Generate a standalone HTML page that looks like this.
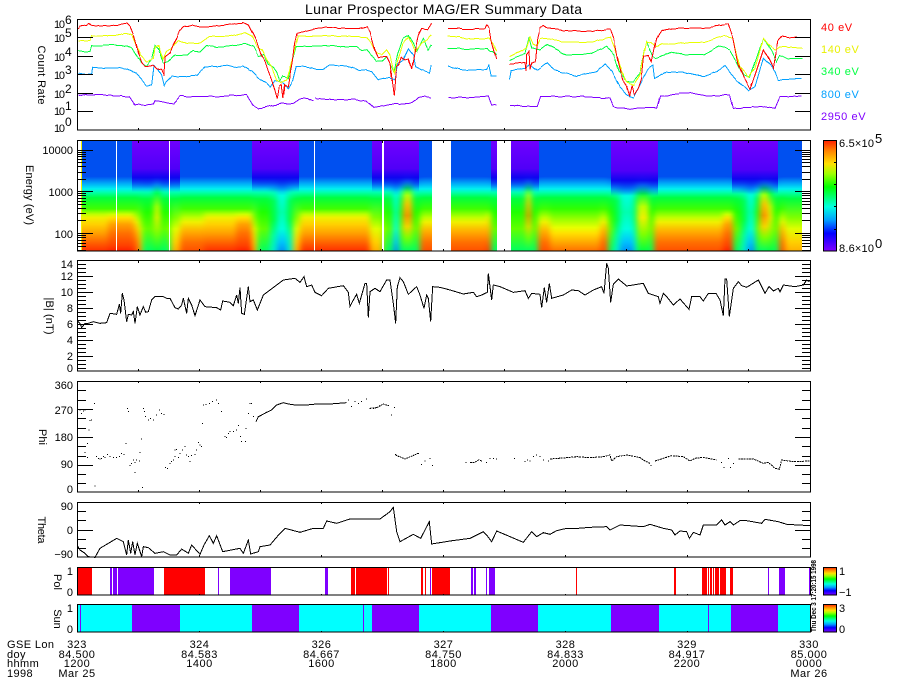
<!DOCTYPE html>
<html><head><meta charset="utf-8"><title>Lunar Prospector MAG/ER Summary Data</title>
<style>
html,body{margin:0;padding:0;background:#fff}
svg{display:block}
text{font-family:"Liberation Sans",sans-serif;font-size:11px;fill:#000}
.p{fill:none;stroke-width:3;shape-rendering:crispEdges;stroke-linejoin:miter}
.t{fill:none;stroke:#000;stroke-width:1;shape-rendering:crispEdges}
.c{text-anchor:middle;letter-spacing:.5px}
.r{text-anchor:end}
.b{shape-rendering:crispEdges}
</style></head><body>
<svg width="900" height="700" viewBox="0 0 900 700" xmlns="http://www.w3.org/2000/svg">
<defs>
<filter id="bx" x="-5%" y="0" width="110%" height="100%" color-interpolation-filters="sRGB"><feGaussianBlur stdDeviation="3 0"/></filter>
<filter id="jit" filterUnits="userSpaceOnUse" x="70" y="15" width="750" height="120" color-interpolation-filters="sRGB"><feTurbulence type="fractalNoise" baseFrequency=".14 .01" numOctaves="1" seed="4" result="n"/><feDisplacementMap in="SourceGraphic" in2="n" scale="3" xChannelSelector="G" yChannelSelector="R"/></filter>
<clipPath id="cp"><rect x="77" y="139" width="733" height="112"/></clipPath>
<linearGradient id="A" x1="0" y1="0" x2="0" y2="1"><stop offset="0" stop-color="#0050f0"/><stop offset=".33" stop-color="#0050f0"/><stop offset=".39" stop-color="#00a8f8"/><stop offset=".44" stop-color="#00f0f0"/><stop offset=".47" stop-color="#00ffb0"/><stop offset=".52" stop-color="#00ff40"/><stop offset=".62" stop-color="#40ff00"/><stop offset=".67" stop-color="#c0ff00"/><stop offset=".70" stop-color="#f0f000"/><stop offset=".76" stop-color="#ffd000"/><stop offset=".84" stop-color="#ffa000"/><stop offset=".95" stop-color="#ff5000"/><stop offset="1" stop-color="#ff3000"/></linearGradient>
<linearGradient id="H" x1="0" y1="0" x2="0" y2="1"><stop offset="0" stop-color="#0050f0"/><stop offset=".33" stop-color="#0050f0"/><stop offset=".39" stop-color="#00a8f8"/><stop offset=".44" stop-color="#00f0f0"/><stop offset=".47" stop-color="#00ffb0"/><stop offset=".52" stop-color="#00ff40"/><stop offset=".62" stop-color="#40ff00"/><stop offset=".67" stop-color="#d0ff00"/><stop offset=".70" stop-color="#ffe000"/><stop offset=".76" stop-color="#ffa000"/><stop offset=".84" stop-color="#ff7000"/><stop offset=".95" stop-color="#ff4000"/><stop offset="1" stop-color="#ff2000"/></linearGradient>
<linearGradient id="M" x1="0" y1="0" x2="0" y2="1"><stop offset="0" stop-color="#0050f0"/><stop offset=".33" stop-color="#0050f0"/><stop offset=".39" stop-color="#00a8f8"/><stop offset=".44" stop-color="#00f0f0"/><stop offset=".47" stop-color="#00ffb0"/><stop offset=".52" stop-color="#00ff40"/><stop offset=".62" stop-color="#40ff00"/><stop offset=".70" stop-color="#c0ff00"/><stop offset=".74" stop-color="#f0f000"/><stop offset=".82" stop-color="#ffb000"/><stop offset=".92" stop-color="#ff7000"/><stop offset="1" stop-color="#ff5000"/></linearGradient>
<linearGradient id="R" x1="0" y1="0" x2="0" y2="1"><stop offset="0" stop-color="#0050f0"/><stop offset=".33" stop-color="#0050f0"/><stop offset=".39" stop-color="#00a8f8"/><stop offset=".44" stop-color="#00f0f0"/><stop offset=".47" stop-color="#00ffb0"/><stop offset=".52" stop-color="#00ff40"/><stop offset=".62" stop-color="#30ff00"/><stop offset=".72" stop-color="#a0ff00"/><stop offset=".79" stop-color="#e8ff00"/><stop offset=".84" stop-color="#ffe000"/><stop offset=".91" stop-color="#ffb000"/><stop offset="1" stop-color="#ff7000"/></linearGradient>
<linearGradient id="Y" x1="0" y1="0" x2="0" y2="1"><stop offset="0" stop-color="#0050f0"/><stop offset=".33" stop-color="#0050f0"/><stop offset=".39" stop-color="#00a8f8"/><stop offset=".44" stop-color="#00f0f0"/><stop offset=".47" stop-color="#00ffb0"/><stop offset=".53" stop-color="#00ff40"/><stop offset=".70" stop-color="#80ff00"/><stop offset=".80" stop-color="#e0ff00"/><stop offset=".92" stop-color="#ffd000"/><stop offset="1" stop-color="#ffb000"/></linearGradient>
<linearGradient id="G" x1="0" y1="0" x2="0" y2="1"><stop offset="0" stop-color="#0050f0"/><stop offset=".34" stop-color="#0050f0"/><stop offset=".40" stop-color="#00a8f8"/><stop offset=".44" stop-color="#00f0f0"/><stop offset=".48" stop-color="#00ffa0"/><stop offset=".53" stop-color="#00ff40"/><stop offset=".65" stop-color="#20ff00"/><stop offset=".80" stop-color="#60ff00"/><stop offset="1" stop-color="#00ff60"/></linearGradient>
<linearGradient id="S" x1="0" y1="0" x2="0" y2="1"><stop offset="0" stop-color="#0050f0"/><stop offset=".28" stop-color="#0050f0"/><stop offset=".34" stop-color="#00a8f8"/><stop offset=".40" stop-color="#00f0f0"/><stop offset=".48" stop-color="#00ff40"/><stop offset=".60" stop-color="#c0ff00"/><stop offset=".70" stop-color="#f0f000"/><stop offset=".85" stop-color="#80ff00"/><stop offset="1" stop-color="#00ff40"/></linearGradient>
<linearGradient id="O" x1="0" y1="0" x2="0" y2="1"><stop offset="0" stop-color="#0050f0"/><stop offset=".26" stop-color="#0050f0"/><stop offset=".32" stop-color="#00a8f8"/><stop offset=".37" stop-color="#00f0f0"/><stop offset=".43" stop-color="#00ff40"/><stop offset=".50" stop-color="#c0ff00"/><stop offset=".58" stop-color="#ffc000"/><stop offset=".68" stop-color="#ff9000"/><stop offset=".78" stop-color="#ffd000"/><stop offset=".88" stop-color="#80ff00"/><stop offset="1" stop-color="#00ff60"/></linearGradient>
<linearGradient id="C" x1="0" y1="0" x2="0" y2="1"><stop offset="0" stop-color="#0050f0"/><stop offset=".36" stop-color="#0050f0"/><stop offset=".44" stop-color="#00b0f8"/><stop offset=".50" stop-color="#00ffe0"/><stop offset=".65" stop-color="#00ffb0"/><stop offset=".80" stop-color="#00ffe0"/><stop offset=".92" stop-color="#00c0ff"/><stop offset="1" stop-color="#0090f8"/></linearGradient>
<linearGradient id="K" x1="0" y1="0" x2="0" y2="1"><stop offset="0" stop-color="#0050f0"/><stop offset=".34" stop-color="#0050f0"/><stop offset=".42" stop-color="#00c0f8"/><stop offset=".48" stop-color="#00ffb0"/><stop offset=".55" stop-color="#00ff50"/><stop offset=".72" stop-color="#00ff40"/><stop offset=".86" stop-color="#00ffa0"/><stop offset="1" stop-color="#00f0d0"/></linearGradient>
<linearGradient id="P" x1="0" y1="0" x2="0" y2="1"><stop offset="0" stop-color="#7000ff"/><stop offset=".55" stop-color="#5000f8"/><stop offset=".72" stop-color="#1000f0" stop-opacity=".95"/><stop offset="1" stop-color="#0030f0" stop-opacity="0"/></linearGradient>
<linearGradient id="RB" x1="0" y1="0" x2="0" y2="1"><stop offset="0" stop-color="#ff2000"/><stop offset=".09" stop-color="#ff8000"/><stop offset=".21" stop-color="#ffe000"/><stop offset=".30" stop-color="#a0ff00"/><stop offset=".42" stop-color="#00ff00"/><stop offset=".60" stop-color="#00ffe0"/><stop offset=".72" stop-color="#00a0ff"/><stop offset=".84" stop-color="#0000ff"/><stop offset="1" stop-color="#8000ff"/></linearGradient>
</defs>

<text x="443.5" y="14" text-anchor="middle" style="font-size:14px" textLength="277" lengthAdjust="spacing">Lunar Prospector MAG/ER Summary Data</text>

<!-- panel 1 curves -->
<g filter="url(#jit)">
<g transform="scale(.33333)">
<polyline class="p" stroke="#7f00ff" points="235,285 245,288 255,284 275,285 300,283 320,286 345,288 365,287 390,292 405,315 415,312 425,315 445,314 460,312 465,302 485,305 500,308 520,312 540,288 570,290 600,290 630,289 660,290 700,286 740,285 760,318 775,325 795,322 810,318 830,314 850,310 880,310 900,297 920,295 940,302"/>
<polyline class="p" stroke="#7f00ff" points="945,294 975,298 1000,300 1030,298 1060,298 1080,301 1100,303 1120,322 1135,320 1150,318 1165,315 1180,312 1200,313 1225,310 1240,305 1255,292 1275,290 1295,293"/>
<polyline class="p" stroke="#00a0ff" points="235,218 250,222 275,222 278,202 310,205 340,205 360,203 380,207 410,222 425,240 440,257 455,255 462,195 475,210 485,225 493,258 500,245 515,230 550,230 590,225 615,200 650,200 680,197 700,202 730,198 755,215 775,235 800,250 810,262 825,240 850,250 865,265 880,240 890,200 920,200 950,208 970,208 985,197 1040,197 1075,210 1095,208 1115,215 1135,240 1170,232 1185,240 1195,190 1210,180 1225,145 1240,165 1245,200 1265,210 1290,218 1295,195"/>
<polyline class="p" stroke="#00ff40" points="235,150 250,155 270,155 275,138 300,138 340,135 380,138 395,145 410,170 425,190 440,198 455,175 465,135 475,145 490,190 505,185 525,165 560,165 580,152 600,155 620,135 650,142 680,140 735,130 760,140 775,170 790,165 805,195 820,200 830,215 840,245 850,230 865,235 875,190 890,140 920,138 990,138 1070,140 1085,150 1100,148 1115,165 1130,185 1145,185 1160,170 1170,190 1182,215 1195,160 1210,115 1225,105 1240,130 1250,155 1270,115 1285,150 1295,135"/>
<polyline class="p" stroke="#e8ff00" points="235,122 270,122 275,108 300,108 340,108 375,100 395,105 405,130 420,165 440,185 460,175 465,140 475,135 490,180 500,155 515,145 535,120 560,130 600,128 625,110 680,110 735,98 755,108 770,140 785,150 800,180 815,200 830,240 845,250 860,240 880,170 895,108 950,108 1040,108 1075,110 1100,112 1115,130 1130,160 1145,165 1160,150 1170,165 1183,220 1195,180 1210,130 1225,110 1235,130 1245,155 1265,130 1285,115 1295,105"/>
<polyline class="p" stroke="#ff0000" points="235,85 240,78 250,76 260,75 268,70 275,77 290,77 320,78 350,77 365,72 380,69 390,80 398,100 405,125 415,165 425,190 435,198 450,198 460,195 470,205 485,208 493,225 497,170 510,160 520,135 530,115 540,90 550,78 565,80 580,75 600,80 640,80 680,75 710,70 730,68 745,75 755,95 770,125 785,170 795,185 805,215 815,240 825,270 832,295 838,260 845,255 850,295 855,255 865,260 870,230 878,185 885,130 892,100 920,92 950,85 990,82 1040,85 1080,85 1100,80 1110,95 1125,150 1135,175 1150,170 1160,170 1170,190 1178,250 1183,287 1190,200 1197,195 1205,170 1215,180 1225,175 1235,205 1245,150 1255,105 1265,85 1285,88 1295,72"/>
</g>
<g transform="translate(450 0) scale(.33333)">
<polyline class="p" stroke="#7f00ff" points="-5,293 60,293 115,288 125,315 140,316"/>
<polyline class="p" stroke="#7f00ff" points="180,317 225,318 260,320 270,290 340,290 400,290 480,295 490,320 530,327 570,324 610,322 620,325 630,290 680,282 720,278 770,288 840,285 850,325 900,322 950,320 975,325 990,290 1055,288"/>
<polyline class="p" stroke="#00a0ff" points="-5,198 30,208 110,208 118,195 125,228 140,230"/>
<polyline class="p" stroke="#00a0ff" points="180,238 185,212 225,205 240,195 260,212 290,190 310,210 380,228 440,215 465,192 485,215 510,260 530,285 550,293 575,245 595,205 610,195 615,235 650,215 700,218 760,230 800,215 825,198 860,240 895,272 915,260 940,175 960,195 975,215 985,240 1055,235"/>
<polyline class="p" stroke="#00ff40" points="-5,145 30,145 110,145 120,155 130,155 140,165"/>
<polyline class="p" stroke="#00ff40" points="180,182 225,160 237,115 245,145 270,150 290,135 350,165 420,162 470,140 490,165 505,210 530,245 548,245 570,220 590,125 610,170 620,175 665,155 700,165 760,165 810,138 840,150 860,185 880,225 900,232 940,115 965,155 980,185 990,165 1010,175 1058,175"/>
<polyline class="p" stroke="#e8ff00" points="-5,108 60,115 105,115 118,115 130,130 140,155"/>
<polyline class="p" stroke="#e8ff00" points="180,170 230,145 240,112 250,135 260,138 270,115 340,125 420,128 480,113 495,150 515,215 530,245 550,255 570,225 590,125 605,128 620,140 635,132 760,128 820,108 850,115 870,200 895,232 915,205 940,115 955,135 975,150 990,140 1010,140 1058,145"/>
<polyline class="p" stroke="#ff0000" points="-5,85 60,87 105,85 110,75 118,85 125,125 140,178"/>
<polyline class="p" stroke="#ff0000" points="180,193 225,187 228,213 230,165 237,155 240,210 245,190 255,185 262,115 270,82 280,78 290,85 350,92 420,95 480,88 490,115 505,190 518,240 530,258 538,285 545,255 552,285 565,265 575,235 582,170 595,165 605,185 620,115 635,92 670,85 700,85 760,85 820,75 835,72 850,115 865,190 880,230 900,268 915,225 925,195 940,150 955,175 970,205 985,120 995,108 1020,112 1055,112"/>
</g>
</g>

<!-- spectrogram -->
<g clip-path="url(#cp)">
<g filter="url(#bx)">
<rect x="60" y="140" width="72" height="111" fill="url(#A)"/>
<rect x="108" y="140" width="28" height="111" fill="url(#H)"/>
<rect x="134" y="140" width="5" height="111" fill="url(#M)"/>
<rect x="139" y="140" width="3" height="111" fill="url(#Y)"/>
<rect x="142" y="140" width="12" height="111" fill="url(#G)"/>
<rect x="154" y="140" width="6" height="111" fill="url(#S)"/>
<rect x="160" y="140" width="11" height="111" fill="url(#G)"/>
<rect x="171" y="140" width="9" height="111" fill="url(#Y)"/>
<rect x="180" y="140" width="24" height="111" fill="url(#M)"/>
<rect x="204" y="140" width="46" height="111" fill="url(#A)"/>
<rect x="236" y="140" width="16" height="111" fill="url(#H)"/>
<rect x="252" y="140" width="5" height="111" fill="url(#Y)"/>
<rect x="257" y="140" width="13" height="111" fill="url(#G)"/>
<rect x="270" y="140" width="7" height="111" fill="url(#K)"/>
<rect x="277" y="140" width="10" height="111" fill="url(#C)"/>
<rect x="287" y="140" width="6" height="111" fill="url(#K)"/>
<rect x="293" y="140" width="7" height="111" fill="url(#Y)"/>
<rect x="300" y="140" width="70" height="111" fill="url(#A)"/>
<rect x="370" y="140" width="13" height="111" fill="url(#Y)"/>
<rect x="383" y="140" width="10" height="111" fill="url(#G)"/>
<rect x="393" y="140" width="6" height="111" fill="url(#C)"/>
<rect x="399" y="140" width="4" height="111" fill="url(#G)"/>
<rect x="403" y="140" width="9" height="111" fill="url(#O)"/>
<rect x="412" y="140" width="8" height="111" fill="url(#G)"/>
<rect x="420" y="140" width="70" height="111" fill="url(#M)"/>
<rect x="487" y="140" width="4" height="111" fill="url(#A)"/>
<rect x="491" y="140" width="20" height="111" fill="url(#G)"/>
<rect x="511" y="140" width="15" height="111" fill="url(#G)"/>
<rect x="526" y="140" width="5" height="111" fill="url(#O)"/>
<rect x="531" y="140" width="7" height="111" fill="url(#G)"/>
<rect x="538" y="140" width="12" height="111" fill="url(#M)"/>
<rect x="550" y="140" width="58" height="111" fill="url(#R)"/>
<rect x="600" y="140" width="8" height="111" fill="url(#M)"/>
<rect x="608" y="140" width="6" height="111" fill="url(#G)"/>
<rect x="614" y="140" width="6" height="111" fill="url(#K)"/>
<rect x="620" y="140" width="14" height="111" fill="url(#C)"/>
<rect x="634" y="140" width="3" height="111" fill="url(#K)"/>
<rect x="637" y="140" width="12" height="111" fill="url(#S)"/>
<rect x="649" y="140" width="5" height="111" fill="url(#G)"/>
<rect x="654" y="140" width="69" height="111" fill="url(#M)"/>
<rect x="723" y="140" width="10" height="111" fill="url(#H)"/>
<rect x="733" y="140" width="8" height="111" fill="url(#G)"/>
<rect x="741" y="140" width="6" height="111" fill="url(#K)"/>
<rect x="747" y="140" width="8" height="111" fill="url(#C)"/>
<rect x="755" y="140" width="5" height="111" fill="url(#G)"/>
<rect x="760" y="140" width="8" height="111" fill="url(#O)"/>
<rect x="768" y="140" width="5" height="111" fill="url(#S)"/>
<rect x="773" y="140" width="6" height="111" fill="url(#G)"/>
<rect x="779" y="140" width="6" height="111" fill="url(#M)"/>
<rect x="785" y="140" width="35" height="111" fill="url(#Y)"/>
</g>
<g class="b" fill="url(#P)">
<rect x="132" y="140" width="48" height="52"/>
<rect x="252" y="140" width="47" height="52"/>
<rect x="372" y="140" width="47" height="52"/>
<rect x="491" y="140" width="6" height="52"/>
<rect x="511" y="140" width="28" height="52"/>
<rect x="611" y="140" width="47" height="56"/>
<rect x="732" y="140" width="46" height="54"/>
</g>
<g class="b" fill="#fff">
<rect x="77" y="139" width="2" height="112"/>
<rect x="79" y="140" width="2" height="111"/>
<rect x="432" y="139" width="19" height="112"/>
<rect x="497" y="139" width="14" height="112"/>
<rect x="802" y="139" width="8" height="112"/>
<rect x="116" y="140" width="1" height="111"/>
<rect x="169" y="140" width="1" height="111"/>
<rect x="314" y="140" width="1" height="111"/>
<rect x="382" y="140" width="2" height="111"/>
</g>
<rect class="b" x="81" y="140" width="1" height="111" fill="#f0f000"/>
</g>

<!-- panel 3 |B| -->
<g transform="scale(.33333) translate(0 765)">
<polyline class="p" stroke="#000" points="232,198 240,205 245,218 255,205 265,205 280,200 300,205 320,203 330,175 350,178 358,148 362,175 367,115 372,135 380,200 385,178 395,180 400,170 405,205 412,155 420,180 430,155 437,172 445,170 455,135 465,125 490,125 500,130 510,130 525,158 535,162 545,150 550,130 560,175 565,130 575,150 585,182 600,135 615,155 650,158 662,165 668,138 690,142 700,152 710,120 715,145 720,98 725,175 733,178 745,95 750,140 760,135 772,165 790,120 810,105 830,90 850,75 885,70 900,82 912,65 920,95 935,90 945,112 965,122 985,100 1030,92 1045,112 1050,155 1060,135 1070,118 1078,145 1095,85 1100,85 1105,188 1110,110 1125,100 1140,110 1160,75 1170,75 1180,145 1187,205 1192,95 1200,68 1210,80 1225,118 1250,95 1260,120 1272,160 1280,120 1285,130 1292,200 1298,95 1320,97 1350,105"/>
</g>
<g transform="translate(450 0) scale(.33333) translate(0 765)">
<polyline class="p" stroke="#000" points="0,105 40,117 70,112 80,125 95,120 112,112 115,55 125,135 130,90 150,95 190,112 225,107 235,130 245,115 270,118 275,158 283,98 290,142 298,85 305,130 340,120 365,105 385,107 405,120 430,105 455,95 462,115 470,25 475,40 482,142 490,88 505,72 530,93 580,85 595,115 625,125 630,145 640,115 650,125 670,150 690,132 717,163 725,125 750,125 760,138 775,115 798,115 810,135 820,182 825,72 830,72 838,185 850,100 865,80 875,92 890,97 925,75 945,115 957,95 970,108 985,100 990,110 1000,90 1035,95 1060,90 1070,75 1078,80"/>
</g>

<!-- phi -->
<g transform="scale(.33333) translate(0 1125)">
<path fill="none" stroke="#000" stroke-width="3" stroke-linecap="square" class="b" d="M240 105h.1M245 115h.1M250 108h.1M255 105h.1M283 85h.1M270 137h.1M275 135h.1M267 165h.1M262 205h.1M255 232h.1M263 247h.1M285 333h.1M290 245h.1M295 250h.1M300 252h.1M305 250h.1M310 245h.1M315 248h.1M322 238h.1M330 245h.1M340 248h.1M350 248h.1M358 245h.1M365 235h.1M372 238h.1M378 205h.1M382 100h.1M385 110h.1M390 272h.1M395 265h.1M400 255h.1M405 262h.1M405 292h.1M410 255h.1M418 258h.1M420 232h.1M424 192h.1M427 337h.1M430 100h.1M433 110h.1M437 125h.1M445 135h.1M452 130h.1M460 135h.1M470 120h.1M478 105h.1M485 115h.1M492 118h.1M497 278h.1M503 280h.1M510 265h.1M515 260h.1M520 255h.1M525 225h.1M530 223h.1M525 245h.1M535 248h.1M540 235h.1M548 225h.1M555 215h.1M560 240h.1M565 245h.1M570 260h.1M575 242h.1M585 238h.1M590 225h.1M595 203h.1M600 210h.1M605 215h.1M608 145h.1M610 90h.1M618 88h.1M628 85h.1M638 80h.1M650 75h.1M655 85h.1M665 110h.1M675 185h.1M680 188h.1M685 175h.1M690 170h.1M700 170h.1M710 165h.1M715 152h.1M722 185h.1M725 200h.1M737 200h.1M738 160h.1M745 115h.1M750 85h.1M755 85h.1M760 125h.1M1045 75h.1M1055 95h.1M1065 80h.1M1075 85h.1M1085 80h.1M1100 72h.1M1110 100h.1M1120 100h.1M1130 98h.1M1140 92h.1M1150 87h.1M1165 92h.1M1175 120h.1M1183 98h.1M1187 238h.1M1195 245h.1M1215 252h.1M1240 242h.1M1255 235h.1M1265 268h.1M1275 258h.1M1290 250h.1M1297 272h.1"/>
<polyline class="p" stroke="#000" points="768,140 775,125 785,120 800,112 815,105 830,90 850,83 865,87 885,90 920,90 950,87 990,87 1040,83"/>
<polyline class="p" stroke="#000" stroke-dasharray="5 2" points="1110,100 1130,98 1150,87 1165,92"/>
<polyline class="p" stroke="#000" stroke-dasharray="5 2" points="1187,240 1215,252 1255,235"/>
</g>
<g transform="translate(450 0) scale(.33333) translate(0 1125)">
<path fill="none" stroke="#000" stroke-width="3" stroke-linecap="square" class="b" d="M48 262h.1M85 255h.1M95 258h.1M110 262h.1M120 250h.1M130 250h.1M140 252h.1M193 250h.1M225 260h.1M232 255h.1M240 258h.1M250 245h.1M260 240h.1M270 245h.1M280 255h.1M295 258h.1M603 272h.1M815 262h.1M822 278h.1M835 250h.1M842 278h.1M850 265h.1"/>
<polyline class="p" stroke="#000" stroke-dasharray="6 2" points="60,262 75,262 85,255 95,258"/>
<polyline class="p" stroke="#000" stroke-dasharray="6 2" points="300,252 350,248 380,245 420,248 460,245 480,240 485,258 500,245 530,240 570,248 585,258 600,265"/>
<polyline class="p" stroke="#000" stroke-dasharray="6 2" points="615,258 640,250 665,242 700,245 720,258 735,250 760,247 800,255"/>
<polyline class="p" stroke="#000" stroke-dasharray="6 2" points="865,252 910,252 940,265 955,262 975,280 988,283 995,255 1030,260 1080,258"/>
</g>

<!-- theta -->
<g transform="scale(.33333) translate(0 1125)">
<polyline class="p" stroke="#000" points="232,512 240,525 255,535 265,545 285,547 300,520 350,490 370,500 380,540 385,495 392,535 398,500 405,540 412,505 425,545 430,515 445,518 465,535 490,530 510,540 530,540 545,522 565,535 575,510 600,538 612,510 628,482 640,505 650,482 668,530 720,520 730,535 745,495 752,537 775,530 780,515 810,510 840,475 855,460 900,472 940,460 970,460 980,438 1010,445 1050,432 1140,432 1170,410 1180,397 1190,470 1200,500 1240,478 1262,490 1288,440 1295,507 1350,498"/>
</g>
<g transform="translate(450 0) scale(.33333) translate(0 1125)">
<polyline class="p" stroke="#000" points="0,498 60,490 100,470 110,480 125,500 140,468 220,502 245,470 260,485 280,473 300,478 320,467 350,460 385,460 420,457 470,455 480,465 510,450 580,455 600,448 640,460 665,465 675,480 690,468 710,470 718,490 730,472 750,480 760,450 800,450 815,435 825,450 840,440 850,450 870,437 890,437 935,445 945,433 985,440 1010,448 1080,452"/>
</g>

<!-- pol -->
<g class="b">
<g fill="#ff0000"><rect x="77" y="567" width="15" height="28"/><rect x="164" y="567" width="41" height="28"/><rect x="351" y="567" width="4" height="28"/><rect x="356" y="567" width="31" height="28"/><rect x="388" y="567" width="1" height="28"/><rect x="421" y="567" width="2" height="28"/><rect x="425" y="567" width="1" height="28"/><rect x="432" y="567" width="18" height="28"/><rect x="576" y="567" width="1" height="28"/><rect x="674" y="567" width="2" height="28"/><rect x="702" y="567" width="5" height="28"/><rect x="708" y="567" width="1" height="28"/><rect x="710" y="567" width="2" height="28"/><rect x="713" y="567" width="1" height="28"/><rect x="715" y="567" width="4" height="28"/><rect x="720" y="567" width="6" height="28"/><rect x="730" y="567" width="3" height="28"/></g>
<g fill="#7f00ff"><rect x="110" y="567" width="2" height="28"/><rect x="113" y="567" width="4" height="28"/><rect x="118" y="567" width="36" height="28"/><rect x="218" y="567" width="1" height="28"/><rect x="230" y="567" width="41" height="28"/><rect x="325" y="567" width="3" height="28"/><rect x="430" y="567" width="1" height="28"/><rect x="471" y="567" width="2" height="28"/><rect x="474" y="567" width="2" height="28"/><rect x="486" y="567" width="1" height="28"/><rect x="489" y="567" width="6" height="28"/><rect x="768" y="567" width="1" height="28"/><rect x="779" y="567" width="6" height="28"/><rect x="809" y="567" width="1" height="28"/></g>
<!-- sun -->
<rect x="77" y="604" width="733" height="28" fill="#00ffff"/>
<g fill="#7f00ff"><rect x="80" y="604" width="1" height="28"/><rect x="132" y="604" width="48" height="28"/><rect x="252" y="604" width="47" height="28"/><rect x="363" y="604" width="1" height="28"/><rect x="372" y="604" width="47" height="28"/><rect x="491" y="604" width="47" height="28"/><rect x="611" y="604" width="48" height="28"/><rect x="708" y="604" width="1" height="28"/><rect x="731" y="604" width="47" height="28"/></g>
</g>

<!-- ticks -->
<g id="lt" class="t">
<path d="M78 37.5h15M78 56.5h15M78 74.5h15M78 93.5h15M78 111.5h15"/>
<path d="M78 150.5h15M78 191.5h15M78 233.5h15M78 152.5h8M78 154.5h8M78 156.5h8M78 159.5h8M78 162.5h8M78 166.5h8M78 172.5h8M78 179.5h8M78 193.5h8M78 195.5h8M78 198.5h8M78 201.5h8M78 204.5h8M78 208.5h8M78 213.5h8M78 220.5h8M78 235.5h8M78 237.5h8M78 240.5h8M78 243.5h8M78 246.5h8M78 250.5h8"/>
<path d="M78 276.5h15M78 292.5h15M78 308.5h15M78 324.5h15M78 340.5h15M78 356.5h15M78 264.5h8M78 268.5h8M78 272.5h8M78 280.5h8M78 284.5h8M78 288.5h8M78 296.5h8M78 300.5h8M78 304.5h8M78 312.5h8M78 316.5h8M78 320.5h8M78 328.5h8M78 332.5h8M78 336.5h8M78 344.5h8M78 348.5h8M78 352.5h8M78 360.5h8M78 364.5h8M78 368.5h8"/>
<path d="M78 409.5h15M78 437.5h15M78 465.5h15M78 390.5h8M78 400.5h8M78 418.5h8M78 428.5h8M78 446.5h8M78 456.5h8M78 474.5h8M78 483.5h8"/>
<path d="M78 530.5h15M78 511.5h8M78 520.5h8M78 539.5h8M78 548.5h8"/>
</g>
<use href="#lt" transform="translate(888 0) scale(-1 1)"/>
<path class="t" d="M138.500 20v2M199.500 20v2M260.500 20v2M321.500 20v2M382.500 20v2M443.500 20v2M504.500 20v2M565.500 20v2M626.500 20v2M687.500 20v2M748.500 20v2M138.500 128v2M199.500 128v2M260.500 128v2M321.500 128v2M382.500 128v2M443.500 128v2M504.500 128v2M565.500 128v2M626.500 128v2M687.500 128v2M748.500 128v2M138.500 141v2M199.500 141v2M260.500 141v2M321.500 141v2M382.500 141v2M443.500 141v2M504.500 141v2M565.500 141v2M626.500 141v2M687.500 141v2M748.500 141v2M138.500 249v2M199.500 249v2M260.500 249v2M321.500 249v2M382.500 249v2M443.500 249v2M504.500 249v2M565.500 249v2M626.500 249v2M687.500 249v2M748.500 249v2M138.500 261v2M199.500 261v2M260.500 261v2M321.500 261v2M382.500 261v2M443.500 261v2M504.500 261v2M565.500 261v2M626.500 261v2M687.500 261v2M748.500 261v2M138.500 369v2M199.500 369v2M260.500 369v2M321.500 369v2M382.500 369v2M443.500 369v2M504.500 369v2M565.500 369v2M626.500 369v2M687.500 369v2M748.500 369v2M138.500 381v2M199.500 381v2M260.500 381v2M321.500 381v2M382.500 381v2M443.500 381v2M504.500 381v2M565.500 381v2M626.500 381v2M687.500 381v2M748.500 381v2M138.500 490v2M199.500 490v2M260.500 490v2M321.500 490v2M382.500 490v2M443.500 490v2M504.500 490v2M565.500 490v2M626.500 490v2M687.500 490v2M748.500 490v2M199.500 502v2M321.500 502v2M443.500 502v2M565.500 502v2M687.500 502v2M199.500 555v2M321.500 555v2M443.500 555v2M565.500 555v2M687.500 555v2M199.500 567v1M321.500 567v1M443.500 567v1M565.500 567v1M687.500 567v1M199.500 594v1M321.500 594v1M443.500 594v1M565.500 594v1M687.500 594v1M199.500 604v1M321.500 604v1M443.500 604v1M565.500 604v1M687.500 604v1M199.500 631v1M321.500 631v1M443.500 631v1M565.500 631v1M687.500 631v1"/>

<!-- frames -->
<g class="t">
<rect x="77.500" y="19.500" width="733" height="110.500"/>
<rect x="77.500" y="140.500" width="733" height="110.500"/>
<rect x="77.500" y="260.500" width="733" height="110.500"/>
<rect x="77.500" y="381.500" width="733" height="110.500"/>
<rect x="77.500" y="502.500" width="733" height="54.500"/>
<rect x="77.500" y="567.500" width="733" height="27.500"/>
<rect x="77.500" y="604.500" width="733" height="27.500"/>
<path d="M811.500 20v110M811.500 141v110M811.500 261v110M811.500 382v110M811.500 503v54M811.500 568v27M811.500 605v27" stroke-opacity="0"/>
</g>

<!-- y labels -->
<g>
<text x="54" y="28" textLength="11">10</text><text x="65" y="24" style="font-size:12px">6</text>
<text x="54" y="42" textLength="11">10</text><text x="65" y="37" style="font-size:12px">5</text>
<text x="54" y="61" textLength="11">10</text><text x="65" y="56" style="font-size:12px">4</text>
<text x="54" y="79" textLength="11">10</text><text x="65" y="74" style="font-size:12px">3</text>
<text x="54" y="98" textLength="11">10</text><text x="65" y="93" style="font-size:12px">2</text>
<text x="54" y="115" textLength="11">10</text><text x="65" y="110" style="font-size:12px">1</text>
<text x="54" y="132" textLength="11">10</text><text x="65" y="126" style="font-size:12px">0</text>
</g>
<g>
<text x="73" y="154" class="r">10000</text><text x="73" y="196" class="r">1000</text><text x="73" y="238" class="r">100</text>
<text x="73" y="268" class="r">14</text><text x="73" y="280" class="r">12</text><text x="73" y="296" class="r">10</text><text x="73" y="312" class="r">8</text><text x="73" y="328" class="r">6</text><text x="73" y="344" class="r">4</text><text x="73" y="360" class="r">2</text><text x="73" y="372" class="r">0</text>
<text x="73" y="389" class="r">360</text><text x="73" y="414" class="r">270</text><text x="73" y="441" class="r">180</text><text x="73" y="468" class="r">90</text><text x="73" y="493" class="r">0</text>
<text x="73" y="510" class="r">90</text><text x="73" y="534" class="r">0</text><text x="73" y="558" class="r">−90</text>
<text x="73" y="575" class="r">1</text><text x="73" y="596" class="r">0</text>
<text x="73" y="612" class="r">1</text><text x="73" y="633" class="r">0</text>
</g>

<!-- rotated axis titles -->
<g>
<text transform="translate(42 75) rotate(90)" dy=".35em" text-anchor="middle" textLength="59">Count Rate</text>
<text transform="translate(30 195) rotate(90)" dy=".35em" text-anchor="middle" textLength="60">Energy (eV)</text>
<text transform="translate(50 316) rotate(90)" dy=".35em" text-anchor="middle" textLength="37">|B| (nT)</text>
<text transform="translate(43 437) rotate(90)" dy=".35em" text-anchor="middle">Phi</text>
<text transform="translate(42 530) rotate(90)" dy=".35em" text-anchor="middle" textLength="27">Theta</text>
<text transform="translate(58 582) rotate(90)" dy=".35em" text-anchor="middle">Pol</text>
<text transform="translate(58 619) rotate(90)" dy=".35em" text-anchor="middle">Sun</text>
</g>

<!-- legend -->
<text x="821" y="31" style="fill:#ff0000;letter-spacing:.6px">40 eV</text>
<text x="821" y="53" style="fill:#e8f000;letter-spacing:.6px">140 eV</text>
<text x="821" y="75" style="fill:#00ff40;letter-spacing:.6px">340 eV</text>
<text x="821" y="98" style="fill:#00a0ff;letter-spacing:.6px">800 eV</text>
<text x="821" y="120" style="fill:#7f00ff;letter-spacing:.6px">2950 eV</text>

<!-- colorbars -->
<rect x="823.500" y="140.500" width="13" height="110.500" fill="url(#RB)" stroke="#000" class="b"/>
<path class="t" d="M834 162.500h3M834 184.500h3M834 206.500h3M834 229.500h3"/>
<text x="839" y="147" textLength="35">6.5×10</text><text x="875" y="143" style="font-size:13px">5</text>
<text x="839" y="252" textLength="35">8.6×10</text><text x="875" y="248" style="font-size:13px">0</text>
<rect x="823.500" y="567.500" width="13" height="27.500" fill="url(#RB)" stroke="#000" class="b"/>
<rect x="823.500" y="604.500" width="13" height="27.500" fill="url(#RB)" stroke="#000" class="b"/>
<text x="839" y="575">1</text><text x="839" y="596">−1</text>
<text x="839" y="612">3</text><text x="839" y="633">0</text>

<text transform="translate(816 632) rotate(-90)" style="font-size:7px;font-weight:bold" textLength="72" lengthAdjust="spacingAndGlyphs">Thu Dec 3 17:20:15 1998</text>

<!-- x labels -->
<text x="7" y="648" style="letter-spacing:.4px">GSE Lon</text><text x="7" y="658" style="letter-spacing:.4px">doy</text><text x="7" y="667" style="letter-spacing:.4px">hhmm</text><text x="7" y="677" style="letter-spacing:.4px">1998</text>
<g>
<text class="c" x="77" y="648">323</text><text class="c" x="77" y="658">84.500</text><text class="c" x="77" y="667">1200</text><text class="c" x="77" y="677">Mar 25</text>
<text class="c" x="199.500" y="648">324</text><text class="c" x="199.500" y="658">84.583</text><text class="c" x="199.500" y="667">1400</text>
<text class="c" x="321.500" y="648">326</text><text class="c" x="321.500" y="658">84.667</text><text class="c" x="321.500" y="667">1600</text>
<text class="c" x="443.500" y="648">327</text><text class="c" x="443.500" y="658">84.750</text><text class="c" x="443.500" y="667">1800</text>
<text class="c" x="565.500" y="648">328</text><text class="c" x="565.500" y="658">84.833</text><text class="c" x="565.500" y="667">2000</text>
<text class="c" x="687" y="648">329</text><text class="c" x="687" y="658">84.917</text><text class="c" x="687" y="667">2200</text>
<text class="c" x="809" y="648">330</text><text class="c" x="809" y="658">85.000</text><text class="c" x="809" y="667">0000</text><text class="c" x="809" y="677">Mar 26</text>
</g>
</svg>
</body></html>
